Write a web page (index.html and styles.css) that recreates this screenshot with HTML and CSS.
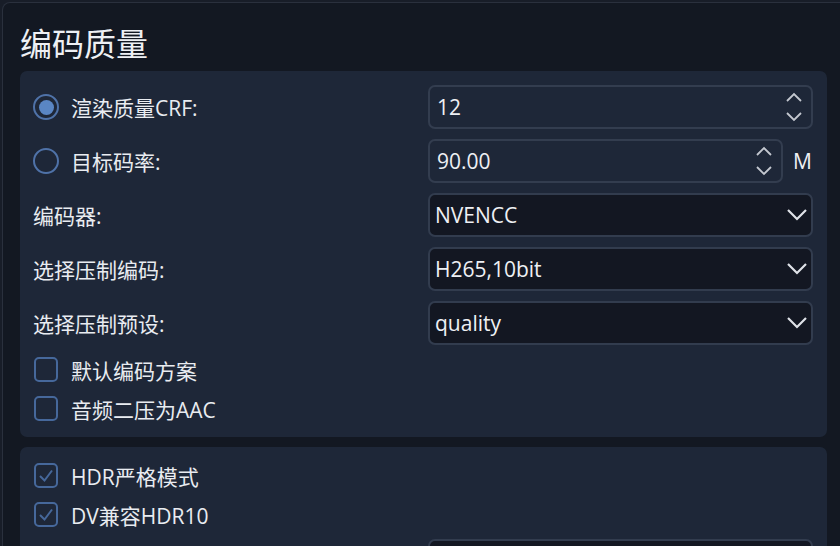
FILE: index.html
```html
<!DOCTYPE html>
<html lang="zh">
<head>
<meta charset="utf-8">
<title>编码质量</title>
<link rel="stylesheet" href="styles.css">
</head>
<body>
<div class="frame">
  <h1 class="title">编码质量</h1>

  <section class="panel">
    <div class="label-cell">
      <span class="radio checked"></span>
      <span class="text">渲染质量CRF:</span>
    </div>
    <div class="field-cell">
      <div class="spin">
        <span class="value">12</span>
        <svg class="spin-arrows" viewBox="0 0 16 30" width="16" height="30"><polyline points="1,9 8,2 15,9"/><polyline points="1,21 8,28 15,21"/></svg>
      </div>
    </div>

    <div class="label-cell">
      <span class="radio"></span>
      <span class="text">目标码率:</span>
    </div>
    <div class="field-cell">
      <div class="spin">
        <span class="value">90.00</span>
        <svg class="spin-arrows" viewBox="0 0 16 30" width="16" height="30"><polyline points="1,9 8,2 15,9"/><polyline points="1,21 8,28 15,21"/></svg>
      </div>
      <span class="unit">M</span>
    </div>

    <div class="label-cell"><span class="text">编码器:</span></div>
    <div class="field-cell">
      <div class="select">
        <span class="value">NVENCC</span>
        <svg class="chev" viewBox="0 0 22 14" width="22" height="14"><polyline points="2,2 11,11 20,2"/></svg>
      </div>
    </div>

    <div class="label-cell"><span class="text">选择压制编码:</span></div>
    <div class="field-cell">
      <div class="select">
        <span class="value">H265,10bit</span>
        <svg class="chev" viewBox="0 0 22 14" width="22" height="14"><polyline points="2,2 11,11 20,2"/></svg>
      </div>
    </div>

    <div class="label-cell"><span class="text">选择压制预设:</span></div>
    <div class="field-cell">
      <div class="select">
        <span class="value">quality</span>
        <svg class="chev" viewBox="0 0 22 14" width="22" height="14"><polyline points="2,2 11,11 20,2"/></svg>
      </div>
    </div>

    <div class="check-row">
      <span class="checkbox"></span>
      <span class="text">默认编码方案</span>
    </div>
    <div class="check-row">
      <span class="checkbox"></span>
      <span class="text">音频二压为AAC</span>
    </div>
  </section>

  <section class="panel">
    <div class="check-row">
      <span class="checkbox"><svg viewBox="0 0 20 21" width="20" height="21"><polyline points="4,11 8.5,15.5 16,5.5"/></svg></span>
      <span class="text">HDR严格模式</span>
    </div>
    <div class="check-row">
      <span class="checkbox"><svg viewBox="0 0 20 21" width="20" height="21"><polyline points="4,11 8.5,15.5 16,5.5"/></svg></span>
      <span class="text">DV兼容HDR10</span>
    </div>
    <div class="label-cell"><span class="text"></span></div>
    <div class="field-cell">
      <div class="select">
        <span class="value"></span>
        <svg class="chev" viewBox="0 0 22 14" width="22" height="14"><polyline points="2,2 11,11 20,2"/></svg>
      </div>
    </div>
  </section>
</div>
</body>
</html>
```

FILE: styles.css
```css
html, body {
  margin: 0;
  padding: 0;
  background: #181d28;
  overflow: hidden;
}

body {
  width: 840px;
  height: 546px;
  font-family: "Open Sans", "Noto Sans CJK SC", sans-serif;
  color: #e9ecf1;
}

.frame {
  margin: 2px 0 0 2px;
  width: 860px;
  height: 544px;
  overflow: hidden;
  box-sizing: border-box;
  border: 1px solid #2a303d;
  border-bottom: none;
  border-radius: 8px 8px 0 0;
  background: #131822;
  padding: 18px 0 0 17px;
}

.title {
  margin: 0 0 8px 0;
  font-family: "Noto Sans CJK SC", sans-serif;
  font-weight: 400;
  font-size: 32px;
  line-height: 42px;
  height: 42px;
  color: #eef0f4;
}

.panel {
  width: 807px;
  box-sizing: border-box;
  background: #1e2738;
  border-radius: 7px;
  padding: 14px 14px 14px 13px;
  margin-bottom: 10px;
  display: grid;
  grid-template-columns: 1fr 1fr;
  column-gap: 10px;
  row-gap: 10px;
}

.text {
  font-size: 21px;
  white-space: nowrap;
}

.label-cell {
  height: 44px;
  display: flex;
  align-items: center;
  gap: 12px;
}

.field-cell {
  height: 44px;
  display: flex;
  align-items: center;
  gap: 10px;
}

.radio {
  width: 26px;
  height: 26px;
  box-sizing: border-box;
  border: 2px solid #4f72a8;
  border-radius: 50%;
  display: flex;
  align-items: center;
  justify-content: center;
  flex: none;
}

.radio.checked::after {
  content: "";
  width: 15px;
  height: 15px;
  border-radius: 50%;
  background: #5a86c4;
}

.spin {
  flex: 1;
  height: 44px;
  box-sizing: border-box;
  border: 2px solid #333d4f;
  border-radius: 7px;
  display: flex;
  align-items: center;
  padding: 0 9px 0 7px;
}

.select {
  flex: 1;
  height: 44px;
  box-sizing: border-box;
  border: 2px solid #323c4e;
  border-radius: 7px;
  background: #131722;
  display: flex;
  align-items: center;
  padding: 0 3px 0 5px;
}

.value {
  flex: 1;
  font-size: 21px;
  color: #eef0f4;
  white-space: nowrap;
}

.spin-arrows polyline {
  fill: none;
  stroke: #c4c8d0;
  stroke-width: 1.8;
}

.chev polyline {
  fill: none;
  stroke: #dfe2e8;
  stroke-width: 2.2;
}

.unit {
  font-size: 21px;
  width: 20px;
  color: #eef0f4;
}

.check-row {
  grid-column: 1 / span 2;
  height: 29px;
  display: flex;
  align-items: center;
  gap: 13px;
  padding-left: 1px;
}

.checkbox {
  width: 24px;
  height: 25px;
  box-sizing: border-box;
  border: 2px solid #46689b;
  border-radius: 5px;
  flex: none;
  display: flex;
  align-items: center;
  justify-content: center;
}

.checkbox svg {
  width: 20px;
  height: 21px;
}

.checkbox polyline {
  fill: none;
  stroke: #46689b;
  stroke-width: 2;
}
```
